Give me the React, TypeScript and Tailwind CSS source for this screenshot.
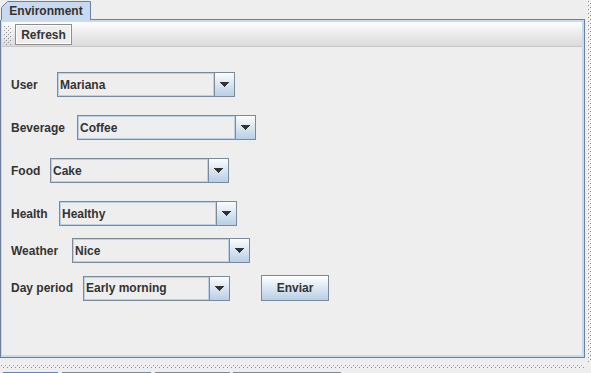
import React from "react";

const FONT = "font-['Liberation_Sans',Arial,sans-serif]";

function Bumps({ w, h, id }: { w: number; h: number; id: string }) {
  return (
    <svg width={w} height={h} className="block shrink-0">
      <defs>
        <pattern id={id} width="4" height="4" patternUnits="userSpaceOnUse">
          <rect x="0" y="0" width="1" height="1" fill="#ffffff" />
          <rect x="2" y="2" width="1" height="1" fill="#ffffff" />
          <rect x="1" y="1" width="1" height="1" fill="#8c8c8c" />
          <rect x="3" y="3" width="1" height="1" fill="#8c8c8c" />
        </pattern>
      </defs>
      <rect width={w} height={h} fill={`url(#${id})`} />
    </svg>
  );
}

function ArrowDown() {
  return (
    <svg width="9" height="5" className="block" shapeRendering="crispEdges">
      <rect x="0" y="0" width="9" height="1" fill="#333" />
      <rect x="1" y="1" width="7" height="1" fill="#333" />
      <rect x="2" y="2" width="5" height="1" fill="#333" />
      <rect x="3" y="3" width="3" height="1" fill="#333" />
      <rect x="4" y="4" width="1" height="1" fill="#333" />
    </svg>
  );
}

interface ComboProps {
  value: string;
  width: string;
}

const Combo: React.FC<ComboProps> = ({ value, width }) => (
  <div className={`flex h-[25px] border border-[#7a8a99] bg-[#eeeeee] ${width}`}>
    <div className="flex flex-1 items-center border border-[#bcd0e6] pl-[1px] leading-none">
      {value}
    </div>
    <div className="flex w-[20px] items-center justify-center border-l border-[#7a8a99] bg-gradient-to-b from-[#fbfcfe] to-[#b8cfe5]">
      <ArrowDown />
    </div>
  </div>
);

const rows = [
  { label: "User", labelW: "w-[46px]", value: "Mariana", w: "w-[178px]", mt: "" },
  { label: "Beverage", labelW: "w-[66px]", value: "Coffee", w: "w-[179px]", mt: "mt-[18px]" },
  { label: "Food", labelW: "w-[39px]", value: "Cake", w: "w-[179px]", mt: "mt-[18px]" },
  { label: "Health", labelW: "w-[48px]", value: "Healthy", w: "w-[178px]", mt: "mt-[18px]" },
  { label: "Weather", labelW: "w-[61px]", value: "Nice", w: "w-[178px]", mt: "mt-[12px]" },
];

export default function App() {
  return (
    <div
      className={`flex h-[373px] w-[591px] flex-col overflow-hidden bg-[#eeeeee] text-[12px] font-bold text-[#333333] ${FONT}`}
    >
      <div className="flex h-[362px]">
        <div className="flex w-[585px] flex-col">
          {/* tab strip */}
          <div className="flex h-[20px] items-end">
            <div className="relative ml-[1px] flex h-[19px] w-[90px] items-center justify-center">
              <svg width="90" height="19" className="absolute left-0 top-0">
                <path
                  d="M0.5,19 L0.5,6.5 L6.5,0.5 L89.5,0.5 L89.5,19 Z"
                  fill="#c8daf0"
                  stroke="none"
                />
                <path
                  d="M0.5,19 L0.5,6.5 L6.5,0.5 L89.5,0.5 L89.5,19"
                  fill="none"
                  stroke="#6c7fa1"
                />
              </svg>
              <span className="relative pt-[1px] leading-none">Environment</span>
            </div>
            <div className="h-[1px] flex-1 bg-[#6c7fa1]" />
          </div>

          {/* panel body */}
          <div className="flex h-[338px] flex-col border-x border-b border-[#6c7fa1] bg-[#c8daf0] pb-[2px] pl-[1px] pr-[2px] pt-[2px]">
            <div className="flex flex-1 flex-col bg-[#eeeeee]">
              {/* toolbar */}
              <div className="flex h-[25px] items-start border-b border-[#c8c8c8] bg-gradient-to-b from-[#fdfdfe] to-[#dadada]">
                <div className="ml-[1px] mt-[3px]">
                  <Bumps w={9} h={20} id="grip" />
                </div>
                <button className="ml-[3px] mt-[2px] flex h-[21px] w-[57px] items-center justify-center border border-[#8e8e8e] bg-[#eeeeee] leading-none shadow-[inset_1px_1px_0_#ffffff,inset_-1px_-1px_0_#ffffff]">
                  Refresh
                </button>
              </div>

              {/* form */}
              <div className="flex flex-col pl-[9px] pt-[25px]">
                {rows.map((r) => (
                  <div key={r.label} className={`flex h-[25px] items-center ${r.mt}`}>
                    <span className={`${r.labelW} leading-none`}>{r.label}</span>
                    <Combo value={r.value} width={r.w} />
                  </div>
                ))}
                <div className="mt-[12px] flex h-[26px] items-center">
                  <span className="w-[72px] leading-none">Day period</span>
                  <Combo value="Early morning" width="w-[147px]" />
                  <button className="ml-[31px] flex h-[26px] w-[68px] items-center justify-center border border-[#7a8a99] bg-gradient-to-b from-[#ffffff] to-[#b8cfe5] leading-none">
                    Enviar
                  </button>
                </div>
              </div>
            </div>
          </div>
        </div>
        <div className="w-[2px]" />
        <Bumps w={4} h={362} id="vsplit" />
      </div>

      {/* horizontal divider */}
      <div className="flex h-[10px] flex-col pt-[2px]">
        <Bumps w={585} h={4} id="hsplit" />
      </div>

      {/* bottom tab tops */}
      <div className="flex h-[1px]">
        <div className="ml-[3px] w-[55px] bg-[#6382bf]" />
        <div className="ml-[4px] w-[89px] bg-[#7a8a99]" />
        <div className="ml-[4px] w-[75px] bg-[#7a8a99]" />
        <div className="ml-[3px] w-[108px] bg-[#7a8a99]" />
      </div>
    </div>
  );
}
